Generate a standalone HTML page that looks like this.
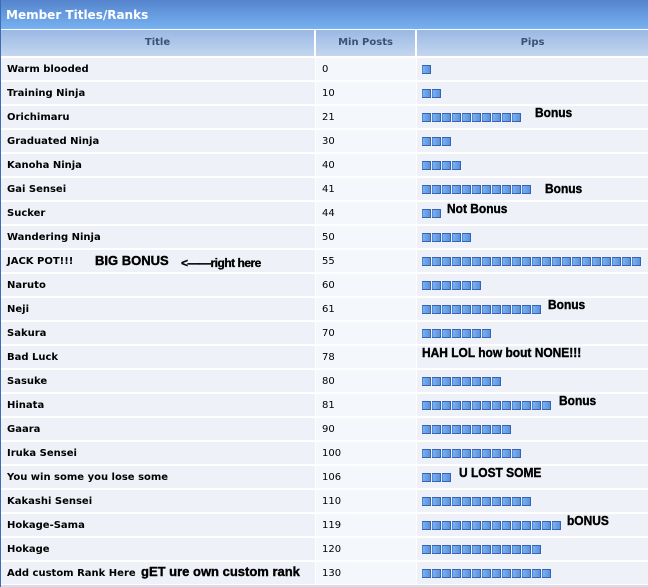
<!DOCTYPE html>
<html><head><meta charset="utf-8"><style>
body{margin:0;width:648px;height:587px;background:#fff;overflow:hidden;font-family:"DejaVu Sans","Liberation Sans",sans-serif;}
.top{position:absolute;left:0;top:0;width:648px;height:29px;background:linear-gradient(#5584cc,#77b2f2);color:#fff;font-size:12px;font-weight:bold;line-height:30px;}
.top span{padding-left:6px;}
.lb{position:absolute;left:0;top:0;width:1px;height:587px;background:#3d6bb5;}
.hd{position:absolute;top:30px;height:26px;background:linear-gradient(#9ab8e4,#c4d6ee);color:#3b5277;font-size:10px;font-weight:bold;text-align:center;line-height:26px;}
.row{position:absolute;left:1px;width:647px;height:22px;}
.c{position:absolute;top:0;height:22px;line-height:24px;font-size:10px;}
.t{left:0;width:308px;padding-left:6px;background:#eef1f7;font-weight:bold;color:#000;}
.p{left:315px;width:94px;padding-left:6px;background:#f4f7fb;color:#000;}
.q{left:416px;width:231px;background:#eef2f8;}
.pip{position:absolute;left:5px;top:7px;height:9px;background:repeating-linear-gradient(90deg,#4f86d6 0,#4f86d6 1px,#7ab0ee 1px,#5c92dc 8px,#3465b5 8px,#3465b5 9px,transparent 9px,transparent 10px);}
.pip::before{content:"";position:absolute;left:0;right:0;top:0;height:1px;background:repeating-linear-gradient(90deg,#3465b5 0,#3465b5 9px,transparent 9px,transparent 10px);}
.pip::after{content:"";position:absolute;left:0;right:0;bottom:0;height:1px;background:repeating-linear-gradient(90deg,#3465b5 0,#3465b5 9px,transparent 9px,transparent 10px);}
.b{position:absolute;font-family:"Liberation Sans",sans-serif;font-weight:bold;font-size:13px;color:#000;top:-3px;line-height:20px;transform:scaleX(0.92);transform-origin:left;-webkit-text-stroke:0.4px #000;}
</style></head><body>
<div class="top"><span>Member Titles/Ranks</span></div>
<div class="hd" style="left:1px;width:313px">Title</div>
<div class="hd" style="left:316px;width:99px">Min Posts</div>
<div class="hd" style="left:417px;width:231px">Pips</div>

<div class="row" style="top:58px"><div class="c t">Warm blooded</div><div class="c p">0</div><div class="c q"><div class="pip" style="width:10px"></div></div></div>
<div class="row" style="top:82px"><div class="c t">Training Ninja</div><div class="c p">10</div><div class="c q"><div class="pip" style="width:20px"></div></div></div>
<div class="row" style="top:106px"><div class="c t">Orichimaru</div><div class="c p">21</div><div class="c q"><div class="pip" style="width:100px"></div><div class="b" style="left:118px">Bonus</div></div></div>
<div class="row" style="top:130px"><div class="c t">Graduated Ninja</div><div class="c p">30</div><div class="c q"><div class="pip" style="width:30px"></div></div></div>
<div class="row" style="top:154px"><div class="c t">Kanoha Ninja</div><div class="c p">40</div><div class="c q"><div class="pip" style="width:40px"></div></div></div>
<div class="row" style="top:178px"><div class="c t">Gai Sensei</div><div class="c p">41</div><div class="c q"><div class="pip" style="width:110px"></div><div class="b" style="left:128px;top:1px">Bonus</div></div></div>
<div class="row" style="top:202px"><div class="c t">Sucker</div><div class="c p">44</div><div class="c q"><div class="pip" style="width:20px"></div><div class="b" style="left:30px">Not Bonus</div></div></div>
<div class="row" style="top:226px"><div class="c t">Wandering Ninja</div><div class="c p">50</div><div class="c q"><div class="pip" style="width:50px"></div></div></div>
<div class="row" style="top:250px"><div class="c t">JACK POT!!! <span style="position:absolute;left:94px;top:-1px;font-family:'Liberation Sans',sans-serif;font-size:13px;-webkit-text-stroke:0.4px #000">BIG BONUS</span><span style="position:absolute;left:180px;top:1px;font-family:'Liberation Sans',sans-serif;font-size:12px;letter-spacing:-0.5px;-webkit-text-stroke:0.3px #000">&lt;——right here</span></div><div class="c p">55</div><div class="c q"><div class="pip" style="width:220px"></div></div></div>
<div class="row" style="top:274px"><div class="c t">Naruto</div><div class="c p">60</div><div class="c q"><div class="pip" style="width:60px"></div></div></div>
<div class="row" style="top:298px"><div class="c t">Neji</div><div class="c p">61</div><div class="c q"><div class="pip" style="width:120px"></div><div class="b" style="left:131px">Bonus</div></div></div>
<div class="row" style="top:322px"><div class="c t">Sakura</div><div class="c p">70</div><div class="c q"><div class="pip" style="width:70px"></div></div></div>
<div class="row" style="top:346px"><div class="c t">Bad Luck</div><div class="c p">78</div><div class="c q"><div class="b" style="left:5px">HAH LOL how bout NONE!!!</div></div></div>
<div class="row" style="top:370px"><div class="c t">Sasuke</div><div class="c p">80</div><div class="c q"><div class="pip" style="width:80px"></div></div></div>
<div class="row" style="top:394px"><div class="c t">Hinata</div><div class="c p">81</div><div class="c q"><div class="pip" style="width:130px"></div><div class="b" style="left:142px">Bonus</div></div></div>
<div class="row" style="top:418px"><div class="c t">Gaara</div><div class="c p">90</div><div class="c q"><div class="pip" style="width:90px"></div></div></div>
<div class="row" style="top:442px"><div class="c t">Iruka Sensei</div><div class="c p">100</div><div class="c q"><div class="pip" style="width:100px"></div></div></div>
<div class="row" style="top:466px"><div class="c t">You win some you lose some</div><div class="c p">106</div><div class="c q"><div class="pip" style="width:30px"></div><div class="b" style="left:42px">U LOST SOME</div></div></div>
<div class="row" style="top:490px"><div class="c t">Kakashi Sensei</div><div class="c p">110</div><div class="c q"><div class="pip" style="width:110px"></div></div></div>
<div class="row" style="top:514px"><div class="c t">Hokage-Sama</div><div class="c p">119</div><div class="c q"><div class="pip" style="width:140px"></div><div class="b" style="left:150px">bONUS</div></div></div>
<div class="row" style="top:538px"><div class="c t">Hokage</div><div class="c p">120</div><div class="c q"><div class="pip" style="width:120px"></div></div></div>
<div class="row" style="top:562px"><div class="c t">Add custom Rank Here <span style="font-family:'Liberation Sans',sans-serif;font-size:13px;position:absolute;left:140px;top:-2px;-webkit-text-stroke:0.4px #000">gET ure own custom rank</span></div><div class="c p">130</div><div class="c q"><div class="pip" style="width:130px"></div></div></div>
<div style="position:absolute;left:1px;top:585px;width:647px;height:2px;background:#d4deec"></div>
<div class="lb"></div>
</body></html>
